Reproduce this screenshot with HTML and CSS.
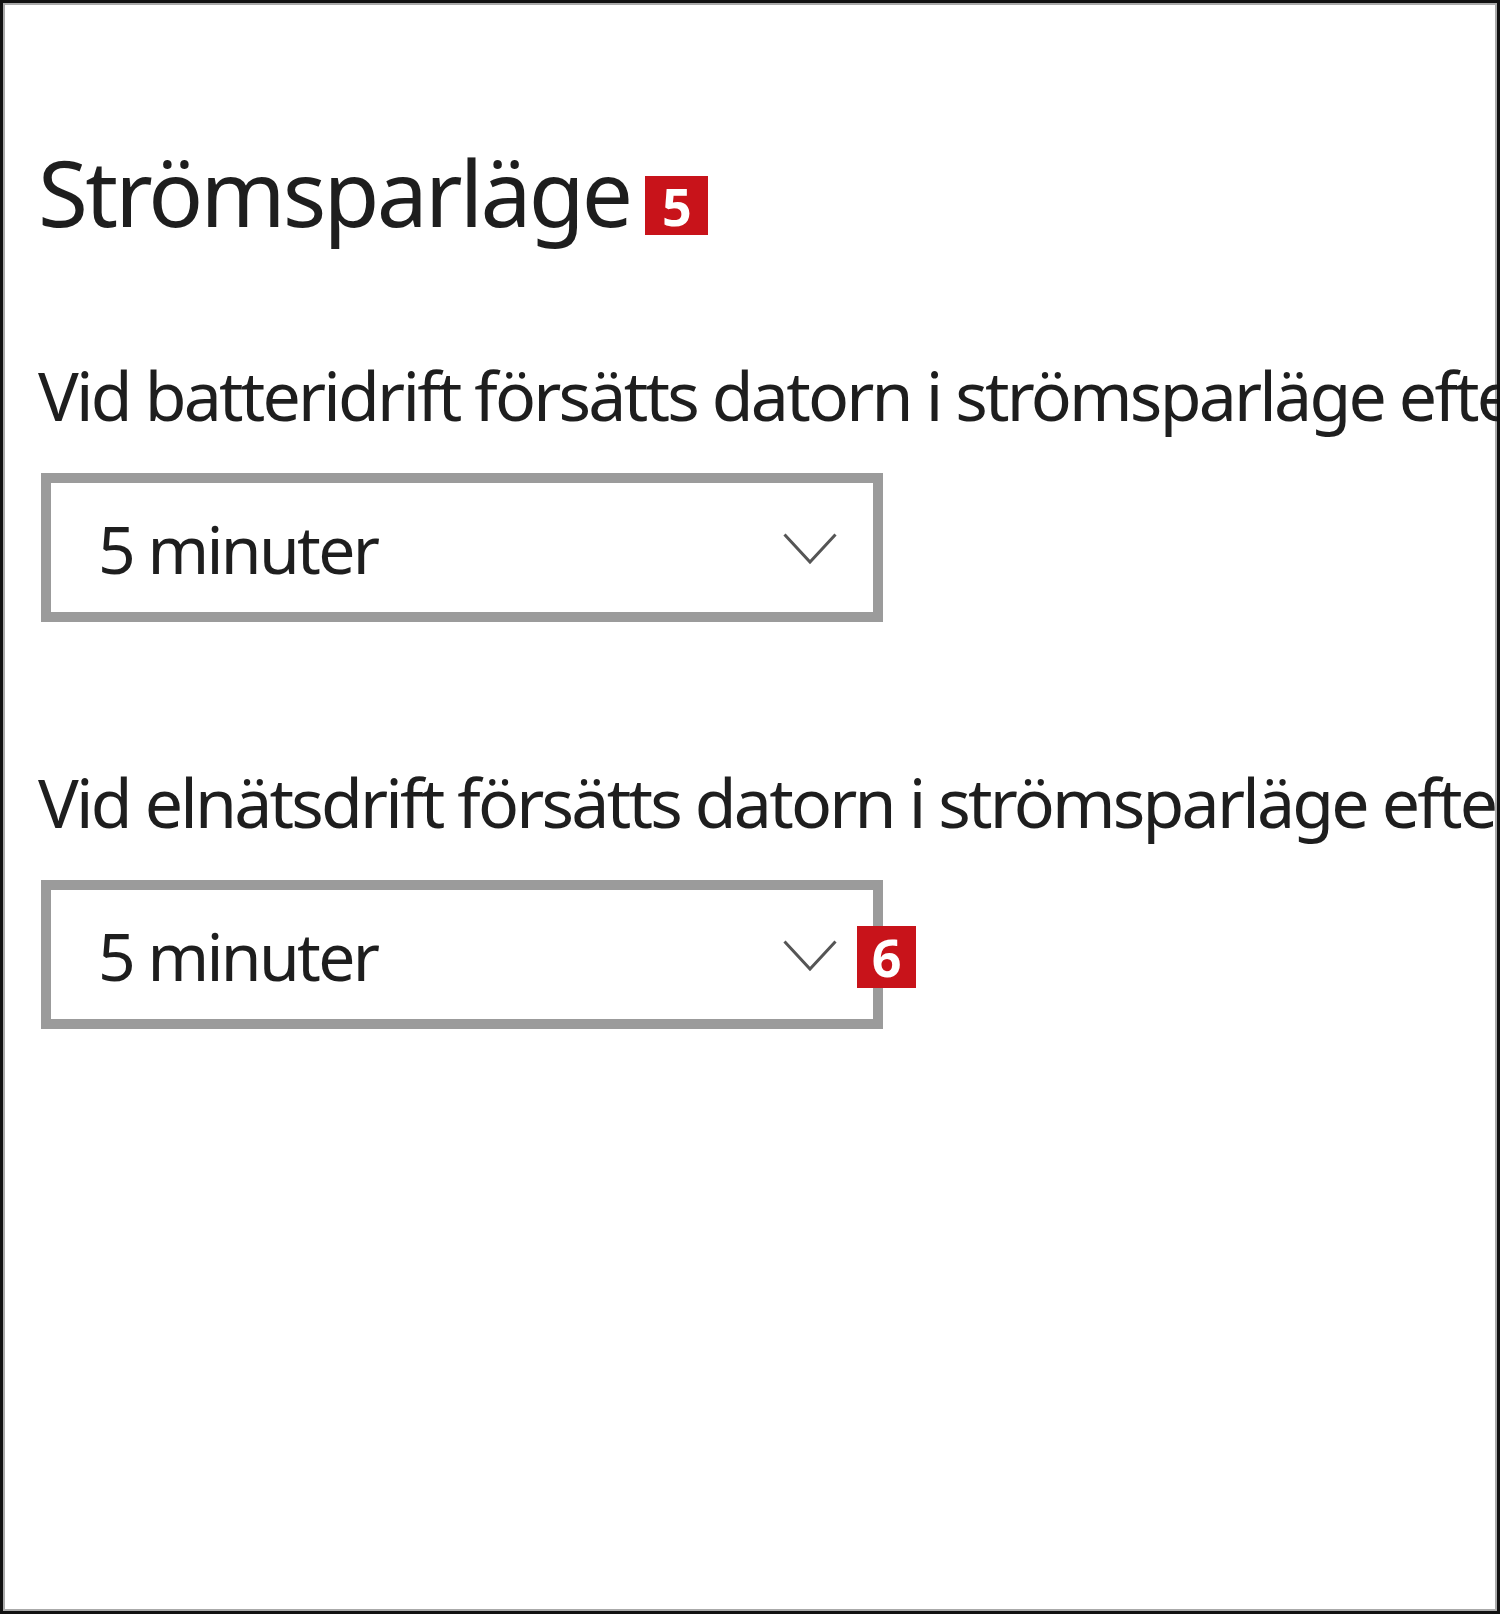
FILE: index.html
```html
<!DOCTYPE html>
<html lang="sv">
<head>
<meta charset="utf-8">
<title>Strömsparläge</title>
<link rel="stylesheet" href="styles.css">
</head>
<body>
<div class="frame">
  <div class="content">
    <h1 class="heading">Strömsparläge<span class="badge badge-inline">5</span></h1>
    <p class="label label-first">Vid batteridrift försätts datorn i strömsparläge efter</p>
    <div class="dropdown">
      <span class="value">5 minuter</span>
      <svg class="chevron" width="54" height="32" viewBox="0 0 54 32"><path d="M1.5 1.5 L27 29 L52.5 1.5" fill="none" stroke="#555" stroke-width="3"/></svg>
    </div>
    <p class="label label-second">Vid elnätsdrift försätts datorn i strömsparläge efter</p>
    <div class="dropdown">
      <span class="value">5 minuter</span>
      <svg class="chevron" width="54" height="32" viewBox="0 0 54 32"><path d="M1.5 1.5 L27 29 L52.5 1.5" fill="none" stroke="#555" stroke-width="3"/></svg>
      <span class="badge badge-over">6</span>
    </div>
  </div>
</div>
</body>
</html>
```
FILE: styles.css
```css
html, body {
  margin: 0;
  padding: 0;
  background: #fff;
}
.frame {
  width: 1500px;
  height: 1614px;
  box-sizing: border-box;
  border: 3px solid #111;
  box-shadow: inset 0 0 0 2px #aaa;
  overflow: hidden;
  background: #fff;
  font-family: "Noto Sans", "Open Sans", sans-serif;
  color: #1e1e1e;
}
.content {
  padding: 134px 0 0 35px;
  white-space: nowrap;
}
.heading {
  margin: 0;
  font-weight: 400;
  font-size: 91px;
  line-height: 110px;
  letter-spacing: -2.8px;
}
.badge {
  display: inline-block;
  background: #c8131a;
  color: #fff;
  font-weight: 700;
  font-size: 52px;
  letter-spacing: 0;
  text-align: center;
  font-family: "Open Sans", "Noto Sans", sans-serif;
}
.badge-inline {
  width: 63px;
  height: 59px;
  line-height: 59px;
  margin-left: 15px;
  vertical-align: 1px;
}
.label {
  margin: 0;
  font-size: 68px;
  line-height: 88px;
  letter-spacing: -2.8px;
}
.label-first {
  margin-top: 104px;
}
.label-second {
  margin-top: 136px;
}
.dropdown {
  position: relative;
  margin-top: 34px;
  margin-left: 3px;
  width: 842px;
  height: 149px;
  box-sizing: border-box;
  border: 10px solid #9b9b9b;
  display: flex;
  align-items: center;
  justify-content: space-between;
  padding: 0 36px 0 47px;
}
.value {
  font-size: 66px;
  line-height: 88px;
  letter-spacing: -2.7px;
}
.chevron {
  display: block;
  margin-top: 2px;
}
.badge-over {
  position: absolute;
  left: 806px;
  top: 36px;
  width: 59px;
  height: 62px;
  line-height: 62px;
}
```
